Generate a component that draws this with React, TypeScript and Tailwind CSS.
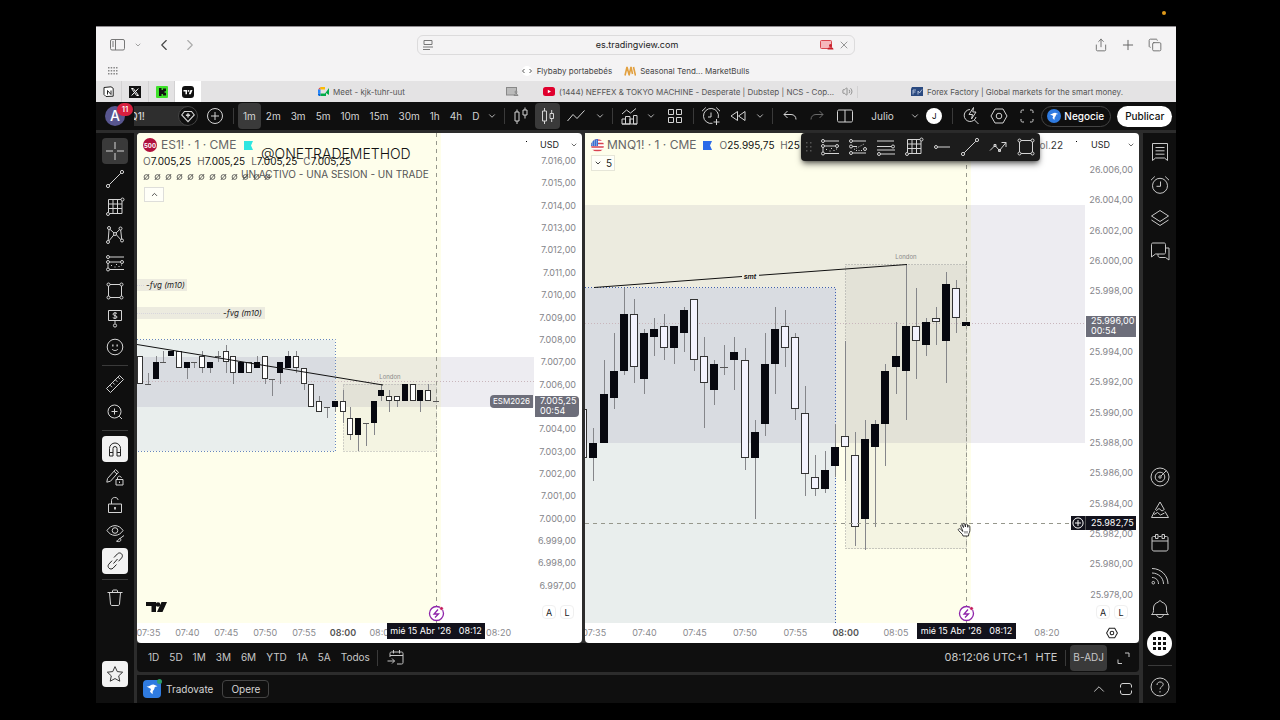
import React, { useState } from "react";
import { ChevronDown, ChevronLeft, ChevronRight, ChevronUp, Copy, Plus, Share, Volume2, X } from "lucide-react";

// open, high, low, close - one candle per minute, the last one is 08:12
type Candle = [number, number, number, number];

const esCandles: Candle[] = [
  [7007.25, 7007.25, 7006, 7006],
  [7006, 7006.5, 7006, 7006],
  [7006.25, 7007.25, 7006.25, 7007],
  [7007, 7007.5, 7007, 7007],
  [7007.25, 7007.5, 7007.25, 7007.5],
  [7007.5, 7007.5, 7006.75, 7006.75],
  [7006.75, 7007, 7006.25, 7007],
  [7007, 7007, 7006.75, 7007],
  [7007.25, 7007.5, 7006.5, 7006.75],
  [7006.75, 7007, 7006.5, 7007],
  [7007.25, 7007.5, 7007, 7007.25],
  [7007.5, 7007.75, 7006.5, 7007],
  [7007.25, 7007.25, 7006, 7006.5],
  [7006.5, 7007, 7006.5, 7007],
  [7007, 7007, 7006.5, 7006.5],
  [7006.75, 7007.25, 7006.75, 7007],
  [7007.25, 7007.25, 7006, 7006.25],
  [7006.25, 7006.25, 7005.5, 7006.25],
  [7006.5, 7007, 7006, 7007],
  [7006.75, 7007.5, 7006.75, 7007.25],
  [7007.25, 7007.5, 7006.5, 7006.75],
  [7006.75, 7006.75, 7005.75, 7006],
  [7006, 7006, 7005, 7005],
  [7005.25, 7005.5, 7004.75, 7004.75],
  [7005, 7005, 7004.5, 7005],
  [7005, 7005.25, 7004.75, 7005.25],
  [7005.25, 7005.75, 7004.25, 7004.75],
  [7004.5, 7005, 7003.5, 7003.75],
  [7003.75, 7004.5, 7003, 7004.5],
  [7004.25, 7004.25, 7003.25, 7004.25],
  [7004.25, 7005.25, 7003.75, 7005.25],
  [7005.5, 7006, 7005.25, 7005.75],
  [7005.5, 7005.75, 7004.75, 7005.25],
  [7005.5, 7005.5, 7005, 7005.25],
  [7005.25, 7006, 7005.25, 7006],
  [7006, 7006, 7005.25, 7005.25],
  [7005.25, 7005.75, 7004.75, 7005.75],
  [7005.75, 7006, 7005.25, 7005.25],
  [7005.25, 7005.25, 7005.25, 7005.25],
];

const nqCandles: Candle[] = [
  [25990.25, 25990.25, 25987, 25987],
  [25987, 25989, 25985.5, 25988],
  [25988, 25993.5, 25988, 25991.25],
  [25991, 25995.25, 25990.25, 25992.75],
  [25992.75, 25998.25, 25992.5, 25996.5],
  [25996.5, 25997.5, 25992, 25993],
  [25992.25, 25995.5, 25991.25, 25995.25],
  [25995, 25996.25, 25993.75, 25995.5],
  [25995.75, 25996.5, 25993.5, 25994.25],
  [25994.25, 25995.75, 25993.25, 25995.75],
  [25995.25, 25997, 25994, 25996.75],
  [25997.5, 25997.5, 25992.75, 25993.5],
  [25993.75, 25995, 25989, 25992],
  [25991.5, 25993.5, 25990.5, 25993.25],
  [25993, 25994.5, 25992.5, 25993],
  [25993.5, 25995, 25991.5, 25994],
  [25993.5, 25994.25, 25986.25, 25987],
  [25987, 25989.5, 25983, 25988.75],
  [25989.25, 25995.25, 25988.5, 25993.25],
  [25993.25, 25997, 25991.25, 25995.5],
  [25995.75, 25996.75, 25993, 25994.25],
  [25995, 25995.25, 25989.5, 25990.25],
  [25990, 25991.75, 25984.5, 25986],
  [25985.75, 25987.25, 25984.5, 25985],
  [25985, 25987.5, 25984.75, 25986.25],
  [25986.5, 25989.25, 25985.75, 25987.75],
  [25988.5, 25994.75, 25985.5, 25987.75],
  [25987.25, 25988.75, 25981.25, 25982.5],
  [25983, 25989.5, 25981, 25988.25],
  [25987.75, 25989.5, 25982.5, 25989.25],
  [25989.25, 25993.25, 25986.5, 25992.75],
  [25993, 25996, 25991.25, 25993.75],
  [25992.75, 25999.75, 25989.5, 25995.75],
  [25995.75, 25998.25, 25992.25, 25994.75],
  [25994.5, 25996.25, 25993.75, 25996],
  [25996.25, 25997, 25994.5, 25996],
  [25994.75, 25999.25, 25992, 25998.5],
  [25998.25, 25998.75, 25995.25, 25996.25],
  [25995.75, 25996, 25995.75, 25996],
];

// the label next to the last price badge is left blank
const priceLabels = (from: number, step: number, count: number, blank: number) =>
  Array.from({ length: count }, (_, i) => {
    const p = from - i * step;
    return p === blank ? "" : `${Math.floor(p / 1000)}.${String(p % 1000).padStart(3, "0")},00`;
  });

const esPrices = priceLabels(7016, 1, 20, 7005);
const nqPrices = priceLabels(26006, 2, 15, 25996);
const times = ["07:35", "07:40", "07:45", "07:50", "07:55", "08:00", "08:05", "", "", "08:20"];

const Icon = ({ children, size = 20 }: { children: React.ReactNode; size?: number }) => (
  <svg width={size} height={size} viewBox="0 0 20 20" fill="none" stroke="currentColor" strokeWidth="1" className="shrink-0" aria-hidden="true">
    {children}
  </svg>
);

const icons: Record<string, React.ReactNode> = {
  cross: <path d="M10 1v7M10 12v7M1 10h7M12 10h7" />,
  trend: <><circle cx="3" cy="17" r="1.6" /><circle cx="17" cy="3" r="1.6" /><path d="M4.2 15.8 15.8 4.2" /></>,
  gann: <><path d="M3.5 2.5H16M3.5 2.5v13M3.5 7H17M3.5 11.5H17M5 16.5H17V4M8 2.5v14M12.5 2.5v14" /><circle cx="17.5" cy="2.5" r="1.5" /><circle cx="3" cy="17" r="1.5" /></>,
  pattern: <><circle cx="4" cy="3" r="1.5" /><circle cx="15.5" cy="3.5" r="1.5" /><circle cx="10" cy="9" r="1.5" /><circle cx="3" cy="17" r="1.5" /><circle cx="17" cy="15.5" r="1.5" /><path d="M4 4.5 3.2 15.5M5 4.3l4 3.7M14.5 4.7 11 8M15.7 5l1 9M8.8 10 4 15.8M11.3 9.7l4.5 5" /></>,
  fibPos: <><path d="M4.5 4H19M4.5 9H15.5M4.5 16.5H19" /><circle cx="3" cy="4" r="1.5" /><circle cx="3" cy="9" r="1.5" /><circle cx="17" cy="9" r="1.5" /><circle cx="3" cy="16.5" r="1.5" /><path d="M3 10.5V15M6 12.5h1M9.5 14h1M11 11.5h1M13.5 13.5h1M16 12h1" /></>,
  fib: <><path d="M4.5 4H18M4.5 16H18" /><circle cx="3" cy="4" r="1.5" /><path d="M4.5 9.5H9" /><circle cx="3" cy="9.5" r="1.5" /><circle cx="17" cy="12" r="1.5" /><circle cx="3" cy="16" r="1.5" /><path d="M6 12.5 17 6.5M8 13.5h7" strokeDasharray="1 1.5" /></>,
  fibLong: <><path d="M1 4H18M1 9.5H15.5M1 13h18M4.5 17H19" /><circle cx="3" cy="17" r="1.5" /><circle cx="17" cy="9.5" r="1.5" /></>,
  rect: <><path d="M5 3.5H15M5 16.5H15M3.5 5V15M16.5 5V15" /><circle cx="3.5" cy="3.5" r="1.5" /><circle cx="16.5" cy="3.5" r="1.5" /><circle cx="3.5" cy="16.5" r="1.5" /><circle cx="16.5" cy="16.5" r="1.5" /></>,
  price: <><path d="M3.5 1.5h13v10h-13zM10 11.5v3M12 4.5C11 3.5 8 3.5 8 5.2s4 1 4 2.8-3 1.7-4.2.6M10 3v7" /><circle cx="10" cy="16.5" r="1.6" /></>,
  smile: <><circle cx="10" cy="10" r="7.8" /><path d="M7 12c1.3 2 4.7 2 6 0" /><path d="M7.2 8.5h1.3M11.5 8.5h1.3" strokeWidth="1.8" /></>,
  ruler: <path d="M1.5 14.5 14.5 1.5l4 4-13 13zM5 11.2l2 2M7.7 8.5l2 2M10.4 5.8l2 2M13 3.2l2 2" />,
  zoom: <><circle cx="9.5" cy="9.5" r="6.5" /><path d="M14.2 14.2 17 17M9.5 6.5v6M6.5 9.5h6" /></>,
  magnet: <path d="M4.5 17V9.5a5.5 5.5 0 0 1 11 0V17h-3.5V9.5a2 2 0 0 0-4 0V17zM4.5 13.5H8M12 13.5h3.5" />,
  pencilLock: <><path d="M2.5 11.5 10.5 2.5l3 2.7-8 9-3.7 1zM9 4.3l3 2.7M11 12.5h7v5.5h-7zM12.5 12.5V11c0-2.4 3.8-2.4 3.8 0" /><path d="M14.5 14.5v1.5" /></>,
  lock: <><path d="M3.5 9h13v8.5h-13zM6.5 9V5.5c0-4 6.5-4 6.5-.5" /><path d="M10 12v2.5" strokeWidth="1.8" /></>,
  eye: <><path d="M2 7.5c4-6.5 12-6.5 16 0-4 6.5-12 6.5-16 0z" /><circle cx="10" cy="7.5" r="2.8" /><path d="M19 12.5l-4 3M15 15.5c-2 0-1 2.5-3.5 2.7 2.5 1 4.7 0 4.5-1.8z" /></>,
  link: <path d="M8.5 12.5 12.5 8M9 6.5l3.5-3.7c2.6-2.5 6.5 1 4.2 4L13.5 10.3M11.5 13.5 8 17.2c-2.6 2.4-6.5-1-4.2-4L7 9.7" />,
  trash: <path d="M2.5 4.5h15M7.5 4.5V3c0-.6.4-1 1-1h3c.6 0 1 .4 1 1v1.5M4.5 4.5l1 11.5c.1.9.6 1.5 1.5 1.5h6c.9 0 1.4-.6 1.5-1.5l1-11.5" />,
  star: <path d="m10 1.8 2.5 5.5 6 .7-4.4 4.1 1.2 5.9L10 15.1 4.7 18l1.2-5.9L1.5 8l6-.7z" />,
  watch: <path d="M2.5 1.5h15v17l-3-2.5H5.5l-3 2.5zM5.5 5.5h9M5.5 8.8h9M5.5 12.2h9" />,
  alarm: <><circle cx="10" cy="10.8" r="7.5" /><path d="M10.5 6.5v4.8H6.5M1 5.2 4.8 1.5M19 5.2 15.2 1.5" /></>,
  alarmPlus: <><path d="M11.5 17.3A7.5 7.5 0 1 1 17.2 12M10 6.5v4.5H7M1 5.2 4.8 1.5M19 5.2 15.2 1.5M15.5 13v6M12.5 16h6" /></>,
  layers: <path d="M10 2.5 18.5 8 10 13.5 1.5 8zM1.5 12l8.5 5.5 8.5-5.5" />,
  chat: <><path d="M3 2h11c1 0 1.5.5 1.5 1.5v8c0 1-.5 1.5-1.5 1.5H5.5L1.5 16V3.5C1.5 2.5 2 2 3 2z" /><path d="M15.5 7H19v12l-3.5-2.5H10c-1.2 0-2-1-2-2V13" /></>,
  radar: <><circle cx="10" cy="10" r="9" /><circle cx="10" cy="10" r="4.8" /><circle cx="10" cy="10" r="1.2" /><path d="m11 9 5.5-5.5" /></>,
  pyramid: <path d="m10 2 4.3 7.5L12 11 9 8.5 6.5 10.5 5.5 9.7zM4.5 11.5 1.5 17.5h17L15 11.5M4 14.5l3.5-2 3 2.5 4-2" />,
  calendar: <><path d="M3.5 3.5H5M8.5 3.5h3M15 3.5h1.5c1 0 1.5.6 1.5 1.5v11c0 1.2-.8 2-2 2H4c-1.2 0-2-.8-2-2V5c0-1 .6-1.5 1.5-1.5M2 8h16" /><path d="M5.5 1.5h2.5v4H5.5zM12 1.5h2.5v4H12z" /></>,
  feed: <><path d="M2 2.5c9 0 16 7 16 15.5M2 7c6.5 0 11.5 5 11.5 11M2 11.5c4 0 6.5 2.8 6.5 6.5" /><circle cx="3.3" cy="16.7" r="1.3" /></>,
  bell: <path d="M1.5 15.5c2-1.5 2-2.5 2-6.5C3.5 6 5.5 4 8 3.2L10 1.5l2 1.7c2.5.8 4.5 2.8 4.5 5.8 0 4 0 5 2 6.5zM6.5 15.5c.5 4 6.5 4 7 0" />,
  help: <><circle cx="10" cy="10" r="9" /><path d="M7 8c0-4.2 6.2-3.8 6.2-.5 0 2-3.2 2.3-3.2 4.8M10 14v1.5" /></>,
  plusCircle: <><circle cx="10" cy="10" r="7.5" /><path d="M10 6v8M6 10h8" /></>,
  bars: <><path d="M4 6h4v9H4zM6 3.5V6M6 15v3M12 4h4v5h-4zM14 1.5V4M14 9v3.5" /></>,
  candles: <><path d="M4.5 5h4v10h-4zM6.5 2v3M6.5 15v3M12 7.5h3.5v5H12zM13.7 4v3.5M13.7 12.5V16" /></>,
  line: <path d="m1.5 15 5.5-6.5 4 4 7.5-8" />,
  indicators: <path d="m3 8 4.5-4 4 3L17 2.5M3 18v-5h3.5v5zM6.5 18v-7.5h4.5V18zM11 18v-5h3.5v5M14.5 18v-8.5H18V18zM3 18h15" />,
  apps: <path d="M3.5 3.5h5v5h-5zM11.5 3.5h5v5h-5zM3.5 11.5h5v5h-5zM11.5 11.5h5v5h-5z" />,
  rewind: <path d="M9.5 5.5v9L3 10zM17 5.5v9L10.5 10z" />,
  undo: <path d="M7.5 5 4 8.5 7.5 12M4 8.5h7c3 0 5 2 5 5" />,
  redo: <path d="m12.5 5 3.5 3.5-3.5 3.5M16 8.5H9c-3 0-5 2-5 5" />,
  split: <path d="M4 4h12c1 0 1.5.5 1.5 1.5v9c0 1-.5 1.5-1.5 1.5H4c-1 0-1.5-.5-1.5-1.5v-9C2.5 4.5 3 4 4 4zM10 4v12" />,
  quick: <><path d="M9 3.5A6 6 0 1 0 15 11M13.5 14 17.5 18M12.5 1.5 8 8.5h3.5l-1 4.5L15 6h-3.2z" /></>,
  hex: <><path d="M6 3h8l4 7-4 7H6l-4-7z" /><circle cx="10" cy="10" r="2.8" /></>,
  full: <path d="M4 7V5.5C4 4.5 4.5 4 5.5 4H7M13 4h1.5c1 0 1.5.5 1.5 1.5V7M16 13v1.5c0 1-.5 1.5-1.5 1.5H13M7 16H5.5c-1 0-1.5-.5-1.5-1.5V13" />,
  hline: <><circle cx="4" cy="10" r="1.5" /><path d="M5.5 10H18" /></>,
  zigzag: <path d="m2 13.5 5-5 4.5 5 6.5-8M13.5 5.5H18V10M6 7.5h2v2H6zM10.5 12.5h2v2h-2z" />,
  goto: <path d="M4 9V5.5C4 4.5 4.5 4 5.5 4h10c1 0 1.5.5 1.5 1.5v9c0 1-.5 1.5-1.5 1.5H11M4 7.5h13M7.5 2v3.5M13.5 2v3.5M1.5 13h7M6 10.5 8.5 13 6 15.5" />,
  expand: <path d="M12 5h4v4M5 11.5v4h4" />,
  square: <path d="M4.5 8.5V7c0-1.5.8-2.5 2.5-2.5h6c1.7 0 2.5 1 2.5 2.5v1.5M15.5 11.5V13c0 1.5-.8 2.5-2.5 2.5H7c-1.7 0-2.5-1-2.5-2.5v-1.5" />,
};

const leftTools = [
  ["Cursor", "cross"], ["Línea de tendencia", "trend"], ["Gann", "gann"], ["Patrones", "pattern"],
  ["Proyección", "fibPos"], ["Rectángulo", "rect"], ["Nota de precio", "price"], ["Emojis", "smile"],
  ["-", ""], ["Medir", "ruler"], ["Acercar", "zoom"], ["-", ""], ["Imán", "magnet"],
  ["Modo dibujo", "pencilLock"], ["Bloquear", "lock"], ["Ocultar", "eye"], ["Enlazar", "link"],
  ["-", ""], ["Eliminar", "trash"],
];

const TopSep = () => <div className="mx-1 h-4 w-px shrink-0 bg-[#3a3a3a]" />;

const BarButton = ({ name, label, className = "w-7" }: { name: string; label: string; className?: string }) => (
  <button aria-label={label} className={`flex h-[26px] shrink-0 items-center justify-center ${className}`}>
    <Icon>{icons[name]}</Icon>
  </button>
);

const MenuArrow = ({ label, className = "w-4" }: { label: string; className?: string }) => (
  <button aria-label={label} className={`flex shrink-0 justify-center ${className}`}>
    <ChevronDown size={10} strokeWidth={2} />
  </button>
);

const TradovateMark = ({ className }: { className: string }) => (
  <svg viewBox="0 0 16 16" className={className} aria-hidden="true">
    <path d="M2.5 5.5c3 .5 4-2 7-2l4 1.8-2.7.8c-.3 2-1 3.2-2 3.9l-.3 3.2-2.5-2.5 1-2.7z" fill="white" />
  </svg>
);

// ---------- Browser ----------

const Browser = () => (
  <header className="shrink-0 border-t border-[#8f8b8f] bg-[#f4f3f4] text-[#444]">
    <div className="flex h-9 items-center px-3">
      <div className="flex flex-1 items-center">
        <button aria-label="Barra lateral" className="flex w-5 justify-center text-[#777]">
          <svg width="16" height="12" viewBox="0 0 16 12" fill="none" stroke="currentColor">
            <rect x=".5" y=".5" width="14" height="10.5" rx="1.5" />
            <path d="M5.5.5V11M2 3h2M2 5h2M2 7h2" />
          </svg>
        </button>
        <button aria-label="Grupos" className="flex w-5 justify-center text-[#777]"><ChevronDown size={8} /></button>
        <button aria-label="Atrás" className="flex w-8 justify-center"><ChevronLeft size={18} strokeWidth={1.5} /></button>
        <button aria-label="Adelante" className="flex w-5 justify-center text-[#aaa]"><ChevronRight size={18} strokeWidth={1.5} /></button>
      </div>
      <div className="flex h-5 w-[438px] items-center rounded-md border border-[#dcdbdc] px-1 text-[#777]">
        <svg width="12" height="12" viewBox="0 0 12 12" fill="none" stroke="currentColor">
          <path d="M2 1.5h8v4H2zM1 8h10M1 10.5h7" />
        </svg>
        <input aria-label="Dirección" defaultValue="es.tradingview.com" className="ml-5 min-w-0 flex-1 bg-transparent text-center text-[9px] text-[#222] outline-none" />
        <svg width="14" height="10" viewBox="0 0 14 10" className="mr-1">
          <rect x=".5" y=".5" width="11" height="8" rx="1" fill="#f5b8bc" stroke="#d9474f" />
          <circle cx="10.5" cy="5.5" r="1.5" fill="#c9202b" /><path d="M7.5 9.5c0-3 6-3 6 0z" fill="#c9202b" />
        </svg>
        <button aria-label="Detener"><X size={12} strokeWidth={1.5} /></button>
      </div>
      <div className="flex flex-1 items-center justify-end gap-3 text-[#666]">
        <button aria-label="Compartir"><Share size={14} strokeWidth={1.5} /></button>
        <button aria-label="Nueva pestaña"><Plus size={16} strokeWidth={1.5} /></button>
        <button aria-label="Pestañas" className="mr-[2px]"><Copy size={14} strokeWidth={1.5} /></button>
      </div>
    </div>

    <nav className="flex h-4 items-center pr-8 pl-3 text-[8px] text-[#444]">
      <svg width="10" height="8" viewBox="0 0 10 8" fill="#888" className="mr-2">
        {[0, 3, 6].map((y) => [0, 2.7, 5.4, 8].map((x) => <rect key={`${x}-${y}`} x={x} y={y} width="1.5" height="1.5" />))}
      </svg>
      <div className="flex flex-1 items-center justify-center gap-3">
        <a href="#flybaby" className="flex items-center gap-1">
          <svg width="12" height="10" viewBox="0 0 12 10" fill="none" stroke="#555">
            <circle cx="6" cy="5" r="5" fill="white" stroke="none" /><path d="M3.5 3 1.5 5l2 2M8.5 3l2 2-2 2" />
          </svg>
          Flybaby portabebés
        </a>
        <a href="#seasonal" className="flex items-center gap-1">
          <svg width="12" height="10" viewBox="0 0 12 10" fill="none" stroke="#e2a03f" strokeWidth="1.6">
            <path d="M1 9.5 3 1l2 7.5M5 9.500 7 1l1.500 7M9.500 1l2 8.500" />
          </svg>
          Seasonal Tend... MarketBulls
        </a>
      </div>
    </nav>

    <div className="mt-[2px] flex h-[21px] items-center bg-[#e4e3e4] text-[8px] text-[#555]">
      <a href="#notion" aria-label="Notion" className="flex h-full w-[26px] items-center justify-center border-r border-[#d3d2d3]">
        <svg width="11" height="11" viewBox="0 0 11 11" fill="white" stroke="#222">
          <path d="M1 1.5 8 .8l2.2 1.5v7.9L3 10.5 1 8.5z" /><path d="M4.500 8.500V4.500l3.500 4v-4" fill="none" />
        </svg>
      </a>
      <a href="#x" aria-label="X" className="flex h-full w-[27px] items-center justify-center border-r border-[#d3d2d3]">
        <svg width="12" height="12" viewBox="0 0 12 12" stroke="white" fill="none">
          <rect width="12" height="12" fill="#111" stroke="none" /><path d="M2.5 2.5h1.8l5.2 7H7.7zM9.3 2.5 6.7 5.3M5.3 6.7 2.7 9.5" />
        </svg>
      </a>
      <a href="#kick" aria-label="Kick" className="flex h-full w-[26px] items-center justify-center border-r border-[#d3d2d3]">
        <svg width="12" height="12" viewBox="0 0 12 12">
          <rect width="12" height="12" rx="1" fill="#3fe22b" /><path d="M3 2h2.5v2H7V2.5h3v2.8H8.5v1.4H10v2.8H7V8H5.5v2H3z" fill="#111" />
        </svg>
      </a>
      <a href="#tv" aria-label="TradingView" className="flex h-full w-[26px] items-center justify-center bg-white">
        <svg width="12" height="12" viewBox="0 0 12 12">
          <rect width="12" height="12" rx="3" fill="#111" /><path d="M1.500 4H5v4.200H3.500V5.500h-2zM8.500 4h2L8.800 8.200h-2z" fill="white" /><circle cx="6.500" cy="4.900" r=".9" fill="white" />
        </svg>
      </a>
      <a href="#meet" className="flex min-w-0 flex-1 items-center pr-1">
        <span className="flex flex-1 items-center justify-center gap-1 pl-4">
          <svg width="11" height="9" viewBox="0 0 11 9">
            <path d="M0 2.5 2.5 0v2.5z" fill="#e94235" /><path d="M2.5 0H7v2.5H2.5z" fill="#fbbc04" />
            <path d="M0 2.5h2.5v4H0z" fill="#2684fc" /><path d="M0 6.5h2.5V9H1L0 8z" fill="#0066da" /><path d="M2.5 6.5H7L11 1v7L8 6v3H2.5z" fill="#00ac47" />
          </svg>
          Meet - kjk-tuhr-uut
        </span>
        <svg width="13" height="9" viewBox="0 0 13 9" fill="#bbb" stroke="#888">
          <rect x=".5" y=".5" width="10" height="7.5" /><circle cx="10" cy="5" r="1" /><path d="M8 8.5c0-2 4-2 4 0z" />
        </svg>
      </a>
      <a href="#youtube" className="flex min-w-0 flex-1 items-center border-r border-[#d3d2d3] pr-1 pl-3">
        <span className="flex min-w-0 flex-1 items-center justify-center gap-1 whitespace-nowrap">
          <svg width="12" height="9" viewBox="0 0 12 9"><rect width="12" height="9" rx="2.5" fill="#e0002d" /><path d="m4.8 2.7 3.2 1.8-3.2 1.8z" fill="white" /></svg>
          (1444) NEFFEX &amp; TOKYO MACHINE - Desperate | Dubstep | NCS - Cop...
        </span>
        <Volume2 size={11} className="text-[#888]" />
      </a>
      <a href="#forex" className="flex min-w-0 flex-1 items-center justify-center gap-1 whitespace-nowrap">
        <svg width="12" height="9" viewBox="0 0 12 9">
          <path d="M1 0h11v9H0V2z" fill="#2b4a80" /><path d="M2 7.5V3h3M2 5h2.5M7 7.5V4l1.5 2L11 2.5" stroke="#c8d4ea" fill="none" strokeWidth=".8" />
        </svg>
        Forex Factory | Global markets for the smart money.
      </a>
    </div>
  </header>
);

// ---------- Top toolbar ----------

const TopBar = () => {
  const [interval, setInterval] = useState("1m");

  return (
    <div className="flex h-7 shrink-0 items-center bg-[#0f0f0f] pr-1 pl-[9px] text-[10px] text-[#d4d4d4]">
      <button aria-label="Menú de usuario, 11 avisos" className="relative z-10 mr-[9px] flex size-5 shrink-0 items-center justify-center rounded-full bg-[#58568f] text-sm font-medium text-white">
        A
        <span className="absolute -top-[3px] -right-2 flex h-[13px] w-4 items-center justify-center rounded-full bg-[#d8203f] text-[8px]">11</span>
      </button>
      <button aria-label="Buscar símbolo" className="flex h-5 w-16 shrink-0 items-center justify-between overflow-hidden rounded-r-full bg-[#2e2e2e] font-medium">
        <span className="-ml-1">Q1!</span>
        <span className="flex size-5 items-center justify-center rounded-full border border-[#444] bg-[#0f0f0f]">
          <Icon size={14}><path d="M5 3.5h10l4 5L10 18 1 8.5z" strokeWidth="1.6" /><path d="M10 6v6M7 9h6" strokeWidth="2" /></Icon>
        </span>
      </button>
      <BarButton name="plusCircle" label="Comparar" className="ml-[3px] w-7" />
      <TopSep />
      {["1m", "2m", "3m", "5m", "10m", "15m", "30m", "1h", "4h", "D"].map((t) => (
        <button
          key={t}
          onClick={() => setInterval(t)}
          className={`h-[26px] shrink-0 rounded px-[5px] ${interval === t ? "bg-[#3a3a3a]" : ""}`}
        >
          {t}
        </button>
      ))}
      <MenuArrow label="Más intervalos" />
      <TopSep />
      <BarButton name="bars" label="Barras" className="w-6" />
      <div className="ml-[2px] rounded bg-[#3a3a3a]"><BarButton name="candles" label="Velas" className="w-[25px]" /></div>
      <BarButton name="line" label="Línea" className="w-8" />
      <MenuArrow label="Tipo de gráfico" />
      <TopSep />
      <BarButton name="indicators" label="Indicadores" className="w-6" />
      <MenuArrow label="Favoritos" className="w-5" />
      <BarButton name="apps" label="Plantillas" />
      <TopSep />
      <BarButton name="alarmPlus" label="Alerta" className="w-[26px]" />
      <BarButton name="rewind" label="Reproducción" />
      <MenuArrow label="Opciones de reproducción" />
      <TopSep />
      <BarButton name="undo" label="Deshacer" className="w-[26px]" />
      <div className="text-[#6a6a6a]"><BarButton name="redo" label="Rehacer" /></div>
      <div className="flex flex-1 items-center justify-end">
        <BarButton name="split" label="Diseño" />
        <button className="ml-3 w-8 text-left">Julio</button>
        <MenuArrow label="Diseños guardados" className="ml-1 w-4" />
        <span className="mr-[6px] ml-[3px] flex size-4 shrink-0 items-center justify-center rounded-full bg-white text-[8px] text-black">J</span>
        <TopSep />
        <BarButton name="quick" label="Búsqueda rápida" />
        <BarButton name="hex" label="Ajustes" />
        <BarButton name="full" label="Pantalla completa" />
        <button className="flex h-[21px] shrink-0 items-center gap-[3px] rounded-full border border-[#444] pr-[6px] pl-[5px] font-medium text-white">
          <span className="flex size-[14px] items-center justify-center rounded-full bg-[#2f7be0]"><TradovateMark className="size-3" /></span>
          Negocie
        </button>
        <button className="ml-[6px] h-[21px] shrink-0 rounded-full bg-white px-2 font-medium text-[#111]">Publicar</button>
      </div>
    </div>
  );
};

const LeftBar = () => (
  <aside className="flex w-[38px] shrink-0 flex-col items-center bg-[#0f0f0f] pt-1 pb-4 text-[#d4d4d4]">
    {leftTools.map(([label, name], i) =>
      label === "-" ? (
        <div key={i} className="my-1 h-px w-[26px] shrink-0 bg-[#3a3a3a]" />
      ) : (
        <button key={i} aria-label={label} className="flex h-7 shrink-0 items-center">
          <span
            className={`flex size-[26px] items-center justify-center rounded ${
              name === "cross" ? "bg-[#3a3a3a]" : name === "magnet" || name === "link" ? "bg-[#f2f2f2] text-[#222]" : ""
            }`}
          >
            <Icon>{icons[name]}</Icon>
          </span>
        </button>
      )
    )}
    <button aria-label="Favoritos" className="mt-auto flex size-[26px] shrink-0 items-center justify-center rounded bg-[#f2f2f2] text-[#222]">
      <Icon size={18}>{icons.star}</Icon>
    </button>
  </aside>
);

const SideButton = ({ name, label }: { name: string; label: string }) => (
  <button aria-label={label} className="flex h-[33px] shrink-0 items-center">
    <Icon>{icons[name]}</Icon>
  </button>
);

const RightBar = () => (
  <aside className="flex w-[33px] shrink-0 flex-col items-center bg-[#0f0f0f] pt-[2px] text-[#c8c8c8]">
    <SideButton name="watch" label="Lista de seguimiento" />
    <SideButton name="alarm" label="Alertas" />
    <SideButton name="layers" label="Objetos" />
    <SideButton name="chat" label="Chats" />
    <div className="flex-1" />
    <SideButton name="radar" label="Filtros" />
    <SideButton name="pyramid" label="Pine" />
    <SideButton name="calendar" label="Calendario" />
    <SideButton name="feed" label="Noticias" />
    <SideButton name="bell" label="Notificaciones" />
    <button aria-label="Productos" className="flex h-9 shrink-0 items-center">
      <svg width="25" height="25" viewBox="0 0 25 25">
        <circle cx="12.5" cy="12.5" r="12.5" fill="white" />
        {[6, 11, 16].map((y) => [6, 11, 16].map((x) => <rect key={`${x}${y}`} x={x} y={y} width="3" height="3" fill="#111" />))}
      </svg>
    </button>
    <div className="my-1 h-px w-6 shrink-0 bg-[#3a3a3a]" />
    <SideButton name="help" label="Ayuda" />
  </aside>
);

// ---------- Charts ----------

type SeriesProps = {
  data: Candle[];
  x0: number; // x of the 08:00 candle
  step: number;
  topPrice: number;
  topY: number;
  scale: number; // px per point
  width: number;
  fill: string;
};

const Series = ({ data, x0, step, topPrice, topY, scale, width, fill }: SeriesProps) => {
  const y = (p: number) => Math.round(topY + (topPrice - p) * scale);
  return (
    <g shapeRendering="crispEdges">
      {data.map(([o, h, l, c], i) => {
        const x = Math.round(x0 + (i - 26) * step);
        const left = x - width / 2;
        const top = y(Math.max(o, c));
        const height = y(Math.min(o, c)) - top;
        return (
          <g key={i}>
            <rect x={x} y={y(h)} width="1" height={Math.max(1, y(l) - y(h))} fill="#85868a" />
            {height === 0 ? (
              <rect x={left} y={top} width={width} height="1" fill="#555" />
            ) : c > o ? (
              <rect x={left} y={top} width={width} height={height} fill="#07080f" />
            ) : (
              <rect x={left + 0.5} y={top + 0.5} width={width - 1} height={height - 1} fill={fill} stroke="#333" />
            )}
          </g>
        );
      })}
    </g>
  );
};

const Bolt = ({ x }: { x: number }) => (
  <g transform={`translate(${x} 480.5)`} fill="none" stroke="#8e24aa">
    <circle r="7" fill="white" strokeWidth="1.3" />
    <path d="M1.5-4-2.5.5H2L-1.5 4" strokeWidth="1.3" />
    <circle cx="5" cy="-5" r="1.8" fill="#c2185b" stroke="white" strokeWidth=".5" />
  </g>
);

const TimeAxis = ({ className }: { className: string }) => (
  <div className="h-5 shrink-0 overflow-hidden">
    <div className={`flex h-5 items-center text-[9px] text-[#8a8a8e] ${className}`}>
      {times.map((t, i) => (
        <span key={i} className={`flex-1 text-center ${t === "08:00" ? "font-semibold text-[#555]" : ""}`}>{t}</span>
      ))}
    </div>
  </div>
);

const PriceAxis = ({ id, children }: { id: string; children: React.ReactNode }) => (
  <div className="flex flex-1 flex-col text-[9px] text-[#85858a]">
    <div className="relative mt-1 flex h-4 items-center pl-[6px]">
      <label htmlFor={id} className="sr-only">Divisa</label>
      <select id={id} className="w-full appearance-none bg-transparent text-[9px] text-[#222] outline-none">
        <option>USD</option>
      </select>
      <ChevronDown size={8} className="pointer-events-none absolute right-1 text-[#222]" />
    </div>
    {children}
    <div className="flex flex-1 items-end justify-center gap-1 pb-1 text-[9px] text-[#222]">
      <button className="size-[14px] rounded-sm border border-[#f0f0f0]">A</button>
      <button className="size-[14px] rounded-sm border border-[#f0f0f0]">L</button>
    </div>
  </div>
);

const EsChart = () => (
  <section className="relative flex min-w-0 flex-[445_1_0%] overflow-hidden rounded bg-white">
    <div className="flex min-w-0 flex-1 flex-col">
      <div className="relative min-h-0 flex-1">
        <svg className="absolute inset-0 h-full w-full">
          <rect width="304" height="100%" fill="#fefeeb" />
          <rect y="146" width="50" height="12" fill="#ecebdf" />
          <rect y="174" width="128" height="12" fill="#ecebdf" />
          <path d="M0 152.5h8M0 180.5h84" stroke="#d8d6dc" strokeDasharray="1 1" />
          <g fontSize="8" fontStyle="italic" fill="#222">
            <text x="9" y="155">-fvg (m10)</text>
            <text x="86" y="183">-fvg (m10)</text>
          </g>
          <rect y="207" width="198" height="111" fill="#e9eeed" />
          <rect x="206" y="251" width="93" height="67" fill="#f4f4e2" />
          <rect y="224" width="397" height="50" fill="#5a5082" fillOpacity=".11" />
          <g fill="none" strokeDasharray="1 2">
            <path d="M0 206.5h198.5v112H0" stroke="#6585c0" />
            <path d="M206.5 251.5h93v67h-93z" stroke="#aaa" />
            <path d="M0 248.5h397" stroke="#c9b6bc" />
          </g>
          <Series data={esCandles} x0={205.5} step={7.79} topPrice={7016} topY={28} scale={22.34} width={6} fill="#fff" />
          <path d="M0 211.5 246 252" stroke="#111" />
          <text x="253" y="246" textAnchor="middle" fontSize="6" fill="#8a8a8a">London</text>
          <text x="124" y="26" fontSize="14" fontWeight="300" fill="#111">@ONETRADEMETHOD</text>
          <text x="104" y="45" fontSize="10" fill="#555">UN ACTIVO - UNA SESION - UN TRADE</text>
          <path d="M299.5 0V490" stroke="#96978c" strokeDasharray="4 4" />
          <Bolt x={299.5} />
          <path d="M9 469h10v10h-4.5v-6H9zM24.5 469H30l-4.5 10H20z" fill="#111" />
          <circle cx="21" cy="471.5" r="2.3" fill="#111" />
        </svg>
        <div className="absolute top-1 left-[6px] flex flex-col">
          <div className="flex h-4 items-center text-[12px] text-[#666]">
            <span className="mr-1 flex size-[14px] items-center justify-center rounded-full bg-[#b0103c] text-[6px] font-bold text-white">500</span>
            ES1! · 1 · CME
            <svg width="9" height="9" viewBox="0 0 9 9" className="ml-2"><path d="M0 0h9L7 4.5 9 9H0z" fill="#2ee6e0" /></svg>
          </div>
          <div className="flex h-4 items-center gap-[6px] text-[10px] whitespace-nowrap text-[#111]">
            {["O", "H", "L", "C"].map((k) => (
              <span key={k}><span className="text-[#666]">{k}</span>7.005,25</span>
            ))}
          </div>
          <div className="flex h-4 items-center gap-1 text-[#444]">
            {Array.from({ length: 12 }, (_, i) => (
              <svg key={i} width="7" height="8" viewBox="0 0 7 8" fill="none" stroke="currentColor" strokeWidth=".8">
                <circle cx="3.5" cy="4" r="2.4" /><path d="M.8 7 6.2 1" />
              </svg>
            ))}
          </div>
          <button aria-label="Contraer leyenda" className="mt-[2px] ml-[1px] flex h-[15px] w-5 items-center justify-center border border-[#dededa] bg-[#fffff8] text-[#222]">
            <ChevronUp size={9} />
          </button>
        </div>
      </div>
      <TimeAxis className="mr-4 -ml-2" />
    </div>
    <div className="flex w-12 shrink-0 flex-col pb-5">
      <PriceAxis id="es-currency">
        <div className="mt-[2px] flex h-[437px] flex-col justify-between pr-[6px] text-right">
          {esPrices.map((p, i) => <span key={i} className="h-3 leading-3">{p}</span>)}
        </div>
      </PriceAxis>
    </div>
    <span className="absolute top-[262px] right-[49px] h-[13px] rounded-l-sm bg-[#6d6e7a] px-[3px] text-[8px] leading-[13px] text-white">ESM2026</span>
    <div className="absolute top-[263px] right-[3px] h-[21px] w-11 rounded-r-sm bg-[#6d6e7a] pl-[5px] text-[9px] leading-[10px] text-white">
      7.005,25<br />00:54
    </div>
    <span className="absolute top-[490px] left-[250px] h-4 w-[98px] bg-[#12121c] text-center text-[9px] leading-4 whitespace-pre text-white">mié 15 Abr '26   08:12</span>
    <span className="absolute top-2 left-[389px] size-px bg-black" />
  </section>
);

const NqChart = () => (
  <section className="relative flex min-w-0 flex-[554_1_0%] rounded bg-white">
    <div className="flex min-w-0 flex-1 flex-col">
      <div className="relative min-h-0 flex-1">
        <svg className="absolute inset-0 h-full w-full">
          <rect width="386" height="100%" fill="#fefeeb" />
          <rect y="155" width="251" height="340" fill="#e9eeed" />
          <rect x="261" y="132" width="121" height="284" fill="#f4f4e2" />
          <rect y="72" width="100%" height="238" fill="#5a5082" fillOpacity=".11" />
          <g fill="none" strokeDasharray="1 2">
            <path d="M0 154.5h250.5V490" stroke="#3f5fb0" />
            <path d="M260.5 131.5h121v284h-121z" stroke="#999" />
            <path d="M0 190.5h500" stroke="#c9b6bc" />
          </g>
          <Series data={nqCandles} x0={260.2} step={10.07} topPrice={26006} topY={37} scale={15.18} width={8} fill="#f3f3fd" />
          <path d="M9 154.5 157 143.5M174 142.3 322 131.5" stroke="#111" />
          <text x="165" y="145.5" textAnchor="middle" fontSize="7" fontWeight="600" fontStyle="italic" fill="#111">smt</text>
          <text x="321" y="126" textAnchor="middle" fontSize="6" fill="#8a8a8a">London</text>
          <path d="M0 390.5h487" stroke="#96978c" strokeDasharray="4 4" />
          <path d="M381.5 0V490" stroke="#96978c" strokeDasharray="4 4" />
          <Bolt x={381.5} />
          <path
            d="M378 398.5l-2.2-5.2c-.5-1.6 1.3-2 1.9-.5l.8 1.7-.7-2.8c-.2-1.5 1.6-1.7 2-.2l.7 2.5-.1-2.3c.2-1.3 1.700-1.2 2 .1l.4 2.5.3-1.3c.5-1 1.7-.6 1.7.6.2 3 .3 5.300-1 7.2l-.3 2.2h-5.5l-.7-1.7-3.6-3.7c-1.2-1.3.3-2.5 1.7-1.5z"
            fill="white" stroke="#222" strokeWidth=".9"
          />
          <path d="M380 398v2.5M382 398v2.5" stroke="#222" strokeWidth=".7" />
        </svg>
        <div className="absolute top-1 left-[6px]">
          <div className="flex h-4 items-center text-[12px] whitespace-nowrap text-[#666]">
            <svg width="13" height="13" viewBox="0 0 13 13" className="mr-[3px]">
              <clipPath id="flag"><circle cx="6.5" cy="6.5" r="6.5" /></clipPath>
              <g clipPath="url(#flag)">
                <rect width="13" height="13" fill="white" />
                <path d="M0 1h13M0 4.5h13M0 8h13M0 11.5h13" stroke="#d8434e" strokeWidth="1.7" />
                <rect width="7" height="7" fill="#3a6fd0" /><path d="M1 2h5M1 4h5M1 6h5" stroke="white" strokeWidth=".7" strokeDasharray="1 1" />
              </g>
            </svg>
            MNQ1! · 1 · CME
            <svg width="9" height="9" viewBox="0 0 9 9" className="mr-2 ml-[6px]"><path d="M0 0h9L7 4.5 9 9H0z" fill="#2b6be8" /></svg>
            <span className="text-[10px] text-[#111]"><span className="text-[#666]">O</span>25.995,75&nbsp; <span className="text-[#666]">H</span>25</span>
          </div>
          <button aria-label="Mostrar 5 indicadores" className="mt-[2px] flex h-4 w-6 items-center justify-center gap-1 border border-[#e6e6d8] bg-[#fffff8] text-[10px] text-[#222]">
            <ChevronDown size={8} strokeWidth={2.5} />5
          </button>
        </div>
        <span className="absolute top-[5px] right-[22px] text-[10px] text-[#333]"><span className="text-[#777]">ol.</span>22</span>
        <span className="absolute top-2 right-2 size-px bg-black" />
      </div>
      <TimeAxis className="mr-[13px] -ml-4" />
    </div>
    <div className="flex w-[54px] shrink-0 flex-col">
      <PriceAxis id="nq-currency">
        <div className="mt-[11px] flex h-[437px] flex-col justify-between pr-[6px] text-right">
          {nqPrices.map((p, i) => <span key={i} className="h-3 leading-3">{p}</span>)}
        </div>
      </PriceAxis>
      <button aria-label="Ajustes de escala" className="flex h-5 shrink-0 items-center justify-center text-[#222]">
        <Icon size={12}><path d="M5.5 2h9l4.5 8-4.5 8h-9L1 10z" strokeWidth="1.7" /><circle cx="10" cy="10" r="3" strokeWidth="1.7" /></Icon>
      </button>
    </div>
    <div className="absolute top-[183px] right-[3px] h-[21px] w-[50px] bg-[#6d6e7a] pl-[5px] text-[9px] leading-[10px] text-white">
      25.996,00<br />00:54
    </div>
    <div className="absolute top-[383px] right-[3px] flex h-[14px] items-center bg-[#12121c] text-[9px] text-white">
      <button aria-label="Añadir en este precio" className="flex h-full w-[14px] items-center justify-center">
        <Icon size={12}><circle cx="10" cy="10" r="8.5" strokeWidth="1.6" /><path d="M10 5v10M5 10h10" strokeWidth="1.6" /></Icon>
      </button>
      <span className="w-[51px] border-l border-[#555] pl-[5px]">25.982,75</span>
    </div>
    <span className="absolute top-[490px] left-[332px] h-4 w-[99px] bg-[#12121c] text-center text-[9px] leading-4 whitespace-pre text-white">mié 15 Abr '26   08:12</span>

    {/* favourite drawing tools */}
    <div className="absolute top-0 right-[99px] flex h-7 items-center rounded bg-[#1c1c1c] text-[#d4d4d4] shadow-md shadow-black/50">
      <svg width="15" height="12" viewBox="0 0 15 12" fill="#555">
        {[1, 5, 9].map((y) => [5, 9].map((x) => <rect key={`${x}${y}`} x={x} y={y} width="1.5" height="1.5" />))}
      </svg>
      {["fibPos", "fib", "fibLong", "gann", "hline", "trend", "zigzag", "rect"].map((n) => (
        <BarButton key={n} name={n} label={`Herramienta ${n}`} />
      ))}
    </div>
  </section>
);

const BottomBars = () => (
  <>
    <div className="flex h-[29px] shrink-0 items-center rounded-b bg-[#0f0f0f] px-[6px] text-[10px] text-[#c8c8c8]">
      {["1D", "5D", "1M", "3M", "6M", "YTD", "1A", "5A", "Todos"].map((r) => (
        <button key={r} className="h-6 px-[5px]">{r}</button>
      ))}
      <div className="mr-1 ml-[2px] h-4 w-px bg-[#3a3a3a]" />
      <button aria-label="Ir a la fecha" className="ml-1"><Icon>{icons.goto}</Icon></button>
      <div className="flex-1" />
      <button className="px-[6px] text-[11px]">08:12:06 UTC+1</button>
      <button className="pr-2 pl-[2px] text-[11px]">HTE</button>
      <div className="mr-1 h-4 w-px bg-[#3a3a3a]" />
      <button className="h-[26px] rounded bg-[#3a3a3a] px-[3px]">B-ADJ</button>
      <button aria-label="Ampliar" className="ml-[6px]"><Icon>{icons.expand}</Icon></button>
    </div>
    <div className="mt-[3px] flex h-7 shrink-0 items-center bg-[#0f0f0f] pr-[3px] pl-[6px] text-[10px] text-[#d4d4d4]">
      <span className="relative flex size-[18px] items-center justify-center rounded bg-[#2f7be0]">
        <TradovateMark className="size-4" />
        <span className="absolute -top-[1px] -right-[1px] size-[5px] rounded-full bg-[#2e9e6b]" />
      </span>
      <span className="ml-[5px]">Tradovate</span>
      <button className="ml-[9px] h-[18px] rounded border border-[#444] px-2">Opere</button>
      <div className="flex-1" />
      <button aria-label="Abrir panel" className="mr-2"><ChevronUp size={18} strokeWidth={1.2} /></button>
      <button aria-label="Maximizar panel"><Icon>{icons.square}</Icon></button>
    </div>
  </>
);

const App: React.FC = () => {
  return (
    <div className="flex h-screen flex-col bg-black pr-[104px] pb-[17px] pl-24 font-['Inter','Liberation_Sans',sans-serif]">
      <div className="flex h-[26px] shrink-0 items-center justify-end pr-[10px]">
        <span className="size-1 rounded-full bg-[#e09a1a]" />
      </div>
      <Browser />
      <TopBar />
      <main className="flex min-h-0 flex-1 bg-[#2c2c2c] pt-[3px]">
        <LeftBar />
        <div className="mr-1 ml-[3px] flex min-w-0 flex-1 flex-col">
          <div className="flex min-h-0 flex-1 gap-[3px]">
            <EsChart />
            <NqChart />
          </div>
          <BottomBars />
        </div>
        <RightBar />
      </main>
    </div>
  );
};

export default App;
